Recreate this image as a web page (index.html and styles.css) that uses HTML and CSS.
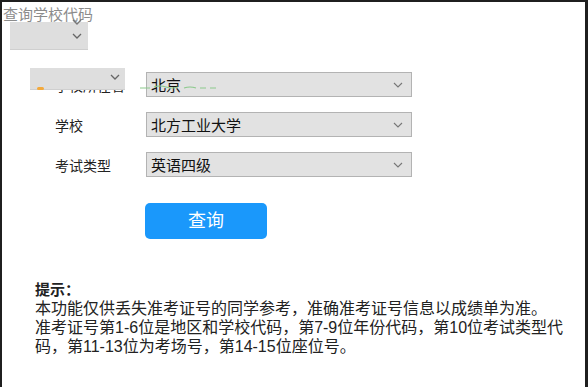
FILE: index.html
```html
<!DOCTYPE html>
<html>
	<head>
		<meta charset="utf-8">
		<link rel="stylesheet" href="styles.css">
	</head>
	<body>
	<div class="panel">
		<div class="head">
			<div class="title">查询学校代码</div>
			<div class="ghost ghost_top">
				<svg class="arrow" width="10" height="6" viewBox="0 0 10 6"><path d="M1 1 L5 5 L9 1" fill="none" stroke="#666" stroke-width="1.3"/></svg>
			</div>
			<svg class="arrow stray" width="10" height="6" viewBox="0 0 10 6"><path d="M1 1 L5 5 L9 1" fill="none" stroke="#777" stroke-width="1.3"/></svg>
		</div>

		<div class="form">
			<div class="row">
				<div class="label">学校所在省</div>
				<div class="sel"><span>北京</span>
					<svg class="arrow" width="10" height="6" viewBox="0 0 10 6"><path d="M1 1 L5 5 L9 1" fill="none" stroke="#777" stroke-width="1.1"/></svg>
				</div>
				<div class="ghost ghost_row">
					<svg class="arrow" width="10" height="6" viewBox="0 0 10 6"><path d="M1 1 L5 5 L9 1" fill="none" stroke="#666" stroke-width="1.3"/></svg>
				</div>
				<div class="dash"></div>
				<svg class="squiggle" width="80" height="8" viewBox="0 0 80 8"><path d="M0 5 L10 5 M14 4 Q20 2 26 4 T38 4 M44 5 Q50 3 56 5 M60 5 L66 5 M70 5 L76 5" fill="none" stroke="#8bc98b" stroke-width="1.2"/></svg>
			</div>
			<div class="row">
				<div class="label">学校</div>
				<div class="sel"><span>北方工业大学</span>
					<svg class="arrow" width="10" height="6" viewBox="0 0 10 6"><path d="M1 1 L5 5 L9 1" fill="none" stroke="#777" stroke-width="1.1"/></svg>
				</div>
			</div>
			<div class="row">
				<div class="label">考试类型</div>
				<div class="sel"><span>英语四级</span>
					<svg class="arrow" width="10" height="6" viewBox="0 0 10 6"><path d="M1 1 L5 5 L9 1" fill="none" stroke="#777" stroke-width="1.1"/></svg>
				</div>
			</div>
			<div class="btn">查询</div>
		</div>

		<div class="tip">
			<b>提示：</b><br>
			本功能仅供丢失准考证号的同学参考，准确准考证号信息以成绩单为准。<br>
			准考证号第1-6位是地区和学校代码，第7-9位年份代码，第10位考试类型代码，第11-13位为考场号，第14-15位座位号。
		</div>
	</div>
	</body>
</html>
```

FILE: styles.css
```css
html, body{
	margin: 0;
	height: 100%;
}
body{
	background: #1f1f1f;
	padding: 2px 3px 0 2px;
	box-sizing: border-box;
	font-family: "Liberation Sans", "Noto Sans CJK SC", sans-serif;
}
.panel{
	background: #fff;
	height: 385px;
	position: relative;
	overflow: hidden;
}
.head{
	height: 70px;
	position: relative;
}
.title{
	padding: 3px 0 0 1px;
	font-size: 15px;
	line-height: 20px;
	color: #8c8c8c;
}
.ghost{
	position: absolute;
	background: #dedede;
	border-bottom: 1px solid #cfcfcf;
	display: flex;
	align-items: center;
	justify-content: flex-end;
	padding-right: 6px;
	box-sizing: border-box;
}
.ghost_top{
	left: 8px;
	top: 20px;
	width: 78px;
	height: 28px;
}
.stray{
	position: absolute;
	left: 70px;
	top: 17px;
}
.form{
	padding-left: 53px;
}
.row{
	display: flex;
	align-items: center;
	height: 25px;
	margin-bottom: 15px;
	position: relative;
}
.label{
	width: 91px;
	font-size: 14px;
	color: #222;
}
.sel{
	width: 266px;
	height: 25px;
	box-sizing: border-box;
	background: #e2e2e2;
	border: 1px solid #b3b3b3;
	display: flex;
	align-items: center;
	justify-content: space-between;
	padding: 0 8px 0 4px;
	font-size: 15px;
	color: #111;
}
.ghost_row{
	left: -25px;
	top: -4px;
	width: 95px;
	height: 22px;
	padding-right: 5px;
	align-items: flex-start;
	padding-top: 6px;
}
.dash{
	position: absolute;
	left: -18px;
	top: 15px;
	width: 7px;
	height: 3px;
	background: #f3a93b;
	border-radius: 2px;
}
.squiggle{
	position: absolute;
	left: 85px;
	top: 11px;
}
.btn{
	margin: 26px 0 0 90px;
	width: 122px;
	height: 36px;
	border-radius: 5px;
	background: #1a98fb;
	color: #fff;
	font-size: 18px;
	line-height: 36px;
	text-align: center;
}
.tip{
	margin-top: 41px;
	padding: 0 15px 0 33px;
	font-size: 16px;
	line-height: 19px;
	color: #222;
}
.tip b{
	font-size: 15px;
}
```
